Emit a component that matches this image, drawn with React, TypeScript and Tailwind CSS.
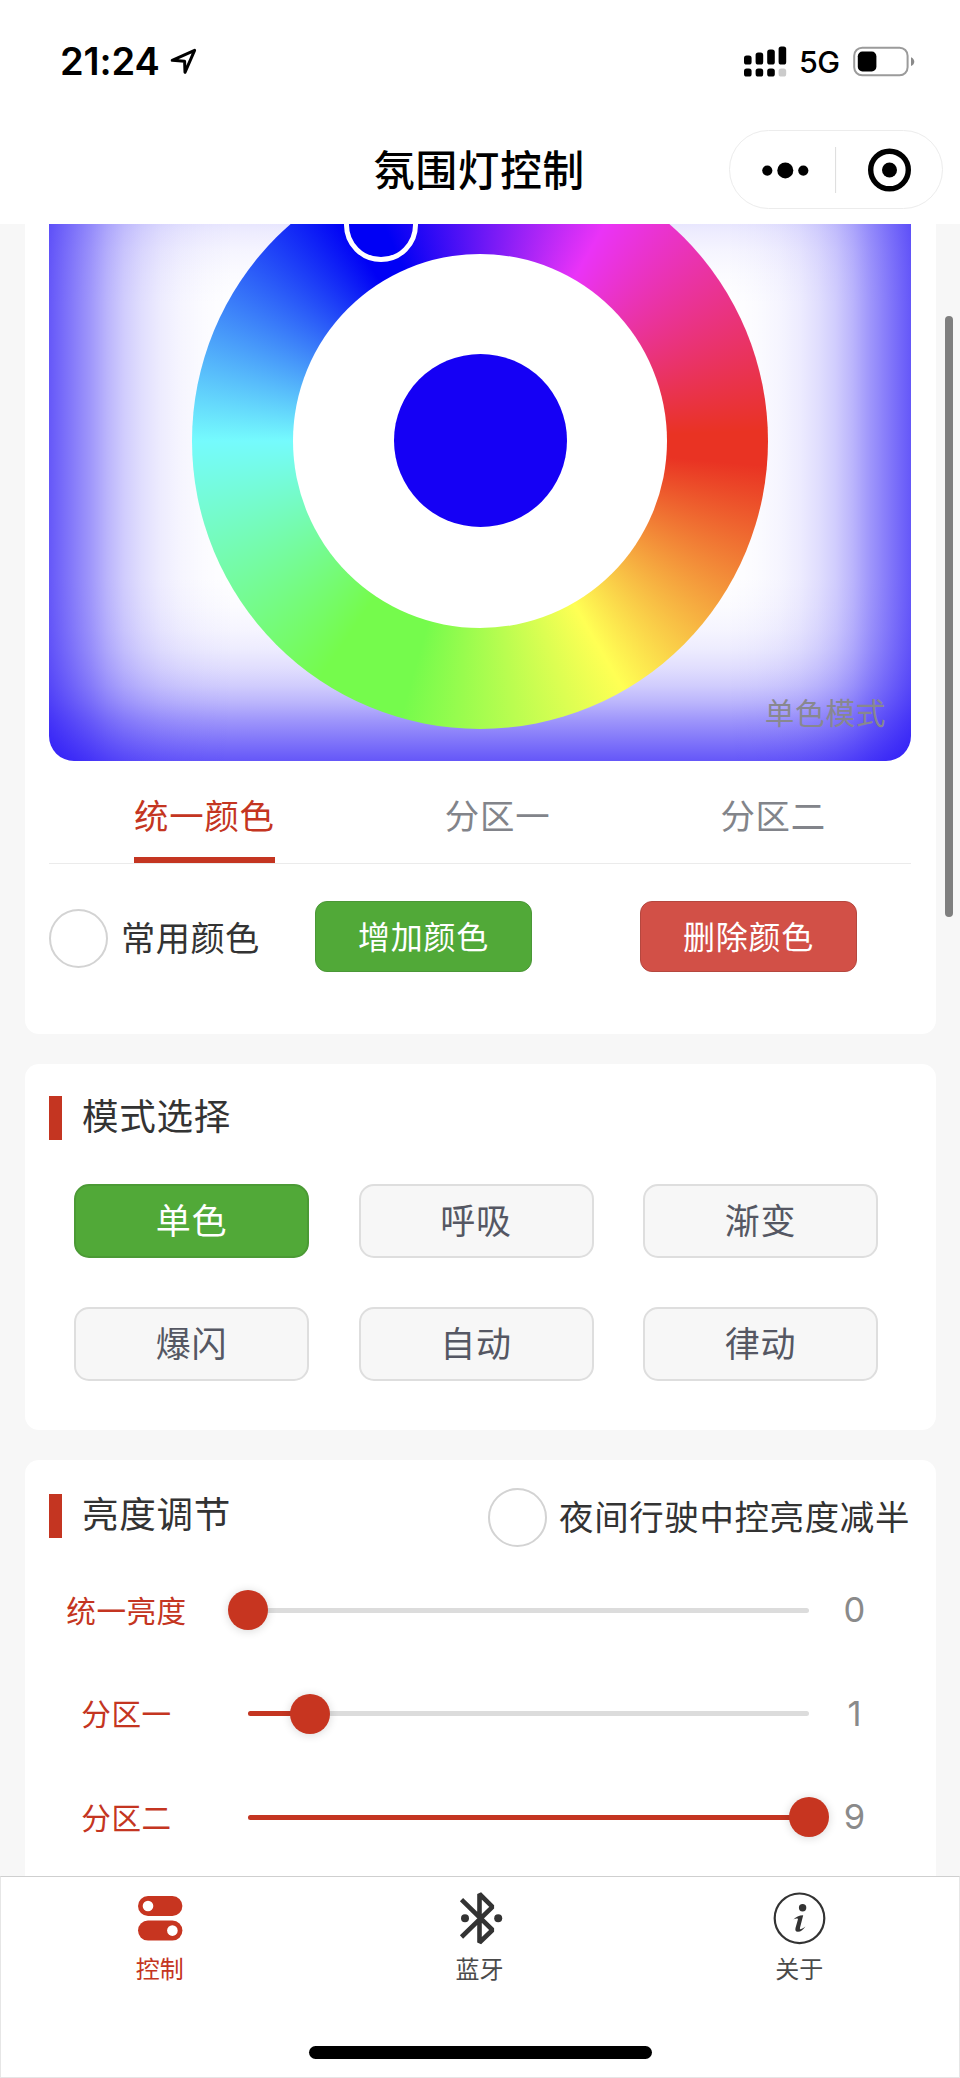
import { useState, type FC, type ReactNode } from "react";

const MODES = ["单色", "呼吸", "渐变", "爆闪", "自动", "律动"];
const ZONES = ["统一颜色", "分区一", "分区二"];
const MAX_BRIGHTNESS = 9;

const StatusBar: FC = () => (
  <div className="flex h-[122px] items-center justify-between pr-[45px] pl-[60px]">
    <div className="flex items-center gap-[10px]">
      <span className="font-[Inter,sans-serif] text-[38px] leading-none font-semibold tracking-[-0.1px]">21:24</span>
      <svg width="27" height="27" viewBox="0 0 27 27" fill="none" stroke="black" strokeWidth="3" strokeLinejoin="round">
        <path d="M2.2 12.3 24.6 2.3 15 24.3 14.6 13.2 Z" />
      </svg>
    </div>
    <div className="flex items-center">
      <svg width="43" height="31" viewBox="0 0 43 31">
        <rect x="0" y="9.5" width="7.6" height="9" rx="2.6" />
        <rect x="11.6" y="6.5" width="7.6" height="12" rx="2.6" />
        <rect x="23.2" y="3.5" width="7.6" height="15" rx="2.6" />
        <rect x="34.6" y="0.5" width="7.6" height="18" rx="2.6" />
        <rect x="0" y="22.5" width="7.6" height="8" rx="2.6" />
        <rect x="11.6" y="22.5" width="7.6" height="8" rx="2.6" />
        <rect x="23.2" y="22.5" width="7.6" height="8" rx="2.6" />
        <rect x="34.6" y="22.5" width="7.6" height="8" rx="2.6" fill="#cbcbcb" />
      </svg>
      <span className="ml-[12px] w-[54px] pt-[2px] font-[Inter,sans-serif] text-[30.5px] leading-none font-medium tracking-[-0.5px]">5G</span>
      <svg width="62" height="31" viewBox="0 0 62 31">
        <rect x="1.2" y="1.7" width="53.4" height="27.6" rx="8" fill="none" stroke="#9b9b9b" strokeWidth="2" />
        <rect x="4.8" y="5.6" width="18.6" height="19.8" rx="4.6" />
        <path d="M58 11.3c4.4 1.8 4.4 7.2 0 8.8z" fill="#8a8a8a" />
      </svg>
    </div>
  </div>
);

const NavBar: FC = () => (
  <div className="relative flex h-[102px] items-start justify-center">
    <h1 className="mt-[16px] -ml-[2px] text-[41.6px] leading-[60px] font-medium tracking-[0.7px]">氛围灯控制</h1>
    <div className="absolute top-[8px] right-[17px] flex h-[79px] w-[214px] items-center rounded-full border border-[#ececec]">
      <svg width="212" height="77" viewBox="0 0 212 77">
        <circle cx="37.3" cy="39.6" r="5.1" />
        <circle cx="55.3" cy="39.4" r="8" />
        <circle cx="73.3" cy="39.6" r="5.1" />
        <path d="M105.6 16v46" stroke="#dcdcdc" />
        <circle cx="159.5" cy="39" r="18.8" fill="none" stroke="black" strokeWidth="5.4" />
        <circle cx="159.5" cy="39" r="7.5" />
      </svg>
    </div>
  </div>
);

const Radio: FC<{ label: string; className: string }> = ({ label, className }) => (
  <label className={`flex items-center text-[#333] ${className}`}>
    <span className="size-[59px] shrink-0 rounded-full border-2 border-[#d3d3d3]" />
    <span className="pb-[3px] whitespace-nowrap">{label}</span>
  </label>
);

const SectionTitle: FC<{ children: ReactNode }> = ({ children }) => (
  <h2 className="flex h-[44px] items-center gap-[20px] text-[36.6px] tracking-[0.7px] text-[#333]">
    <span className="h-[44px] w-[13px] bg-[#c43521]" />
    <span className="pb-[4px]">{children}</span>
  </h2>
);

// Selected color glows inwards from all four edges
const ColorWheel: FC = () => (
  <div className="relative -mt-[104px] flex h-[641px] shrink-0 items-center justify-center rounded-[25px] bg-white bg-[linear-gradient(to_right,var(--glow)),linear-gradient(to_left,var(--glow)),linear-gradient(to_bottom,var(--glow)),linear-gradient(to_top,var(--glow))] [--glow:#1500f5a8,#1500f58a_20px,#1500f569_41px,#1500f54b_58px,#1500f533_75px,#1500f521_93px,#1500f513_112px,#1500f50a_132px,#1500f504_155px,#1500f500_185px]">
    <div className="flex size-[576px] items-center justify-center rounded-full bg-[conic-gradient(from_30deg,#ea33f7,#e93323_58deg,#e93323_65deg,#ffff54_120deg,#75fb4c_166deg,#75fb4c_184deg,#75fbfd_240deg,#0000f5_298deg,#0000f5_306deg,#ea33f7)]">
      <div className="flex size-[374px] items-center justify-center rounded-full bg-white">
        <div className="size-[173px] rounded-full bg-[#1500f5]" />
      </div>
    </div>
    <span className="absolute top-[68px] left-[295px] size-[74px] rounded-full border-[5px] border-white" />
    <span className="absolute right-[25px] bottom-[28px] text-[29.6px] leading-[42px] tracking-[0.7px] text-[#88888f]">单色模式</span>
  </div>
);

type BrightnessRowProps = {
  label: string;
  value: number;
};

const BrightnessRow: FC<BrightnessRowProps> = ({ label, value }) => {
  const percent = `${(value / MAX_BRIGHTNESS) * 100}%`;

  return (
    <div className="flex h-[103.5px] items-center">
      <span className="w-[155px] pb-[1px] text-center text-[29.6px] tracking-[0.5px] text-[#c43521]">{label}</span>
      <div className="relative ml-[44px] h-[5px] w-[560.5px] rounded-full bg-[#dcdcdc]">
        <div className="h-full rounded-full bg-[#c43521]" style={{ width: percent }} />
        <div
          className="absolute top-1/2 size-[40px] -translate-1/2 rounded-full bg-[#c73520] shadow-[0_1px_10px_rgba(0,0,0,0.16)]"
          style={{ left: percent }}
        />
      </div>
      <span className="w-[92px] text-center font-[Inter,sans-serif] text-[34.5px] text-[#8a8a8a]">{value}</span>
    </div>
  );
};

const TabBar: FC = () => (
  <nav className="flex h-[202px] flex-col items-center border border-[#e6e6e6] border-t-[#cfcfcf] text-[24px] leading-[36px] text-[#4a4a4a]">
    <div className="grid h-[169px] w-full grid-cols-3">
      <div className="flex flex-col items-center pt-[11px] pr-[2px] text-[#c43521]">
        <svg width="60" height="63" viewBox="0 0 60 63" fill="#c73520">
          <rect x="8" y="8" width="44.4" height="20" rx="10" />
          <rect x="8" y="32.6" width="44.4" height="20" rx="10" />
          <circle cx="18" cy="18" r="5.3" fill="white" />
          <circle cx="42.4" cy="42.6" r="5.3" fill="white" />
        </svg>
        <span className="-mt-px">控制</span>
      </div>
      <div className="flex flex-col items-center pt-[11px] pr-[1px]">
        <svg width="60" height="63" viewBox="0 0 60 63" fill="#333">
          <path d="M12.5 11.7 43.5 42 30.5 54.5V6L43.5 18.8 12.5 49" fill="none" stroke="#333" strokeWidth="4.6" strokeLinejoin="bevel" />
          <circle cx="16" cy="30.3" r="4" />
          <circle cx="49.2" cy="30.3" r="4" />
        </svg>
        <span className="-mt-px">蓝牙</span>
      </div>
      <div className="flex flex-col items-center pt-[11px]">
        <svg width="60" height="63" viewBox="0 0 60 63" fill="#333">
          <circle cx="30.5" cy="30.3" r="24.8" fill="none" stroke="#333" strokeWidth="2.2" />
          <circle cx="33.6" cy="19.7" r="3.7" />
          <path d="M24.4 31.5c2.6-2.6 5.5-4.2 9.8-4.3l-3.2 12.6c-.3 1.4.2 1.7 1.2 1.2 1.6-.7 2.7-1.5 4.2-2.6-1.8 3-4.7 5.2-7.4 5.4-2.4.1-3-1.5-2.5-3.7l2.4-8.6c.4-1.7-2.3-.7-4.5 0z" />
        </svg>
        <span className="-mt-px">关于</span>
      </div>
    </div>
    <div className="h-[12.5px] w-[343px] rounded-full bg-black" />
  </nav>
);

export default function App() {
  const [zone, setZone] = useState(0);
  const [mode, setMode] = useState(0);

  return (
    <div className="flex h-[2078px] w-[960px] flex-col overflow-hidden bg-white font-['Noto_Sans_CJK_SC',sans-serif] text-black">
      <header className="h-[224px] shrink-0">
        <StatusBar />
        <NavBar />
      </header>

      <main className="relative flex h-[1652px] shrink-0 flex-col gap-[30px] overflow-hidden bg-[#f7f7f7] px-[24.5px]">
        <section className="flex h-[810px] shrink-0 flex-col rounded-b-[14px] bg-white px-[24.5px]">
          <ColorWheel />
          <div className="flex h-[103px] shrink-0 justify-around border-b border-[#ebebeb] text-[34.4px] tracking-[0.8px]">
            {ZONES.map((name, i) => (
              <button
                key={name}
                onClick={() => setZone(i)}
                className={`flex h-[102px] items-center border-b-[6px] pt-[11px] ${i === zone ? "border-[#c43521] text-[#c43521]" : "border-transparent text-[#82848a]"}`}
              >
                {name}
              </button>
            ))}
          </div>
          <div className="flex items-start pt-[37px]">
            <Radio label="常用颜色" className="mt-[8px] w-[266px] gap-[13px] text-[34.2px] tracking-[0.5px]" />
            <button className="h-[71px] w-[217px] rounded-[12px] border border-[#4b9737] bg-[#51a938] pb-[4px] text-[32px] tracking-[0.7px] text-white">
              增加颜色
            </button>
            <button className="ml-[108px] h-[71px] w-[217px] rounded-[12px] border border-[#b5473f] bg-[#d25047] pb-[4px] text-[32px] tracking-[0.7px] text-white">
              删除颜色
            </button>
          </div>
        </section>

        <section className="h-[366px] shrink-0 rounded-[14px] bg-white px-[24.5px] pt-[31.5px]">
          <SectionTitle>模式选择</SectionTitle>
          <div className="mt-[44.5px] grid grid-cols-[repeat(3,235px)] gap-x-[49.5px] gap-y-[49px] pl-[25px]">
            {MODES.map((name, i) => (
              <button
                key={name}
                onClick={() => setMode(i)}
                className={`h-[74px] rounded-[15px] border-2 pb-[3px] text-[35px] tracking-[0.8px] ${i === mode ? "border-[#4b9a35] bg-[#51a938] text-white" : "border-[#dedede] bg-[#f7f7f7] text-[#555763]"}`}
              >
                {name}
              </button>
            ))}
          </div>
        </section>

        <section className="h-[500px] shrink-0 rounded-[14px] bg-white px-[24.5px] pt-[28px]">
          <div className="flex h-[59px] justify-between">
            <div className="pt-[5.5px]">
              <SectionTitle>亮度调节</SectionTitle>
            </div>
            <Radio label="夜间行驶中控亮度减半" className="mr-[1px] gap-[12px] text-[34.4px] tracking-[0.7px]" />
          </div>
          <div className="mt-[11.5px]">
            <BrightnessRow label="统一亮度" value={0} />
            <BrightnessRow label="分区一" value={1} />
            <BrightnessRow label="分区二" value={9} />
          </div>
        </section>

        <div className="absolute top-[92px] right-[7px] h-[601px] w-[8px] rounded-full bg-[#7f7f7f]" />
      </main>

      <TabBar />
    </div>
  );
}
